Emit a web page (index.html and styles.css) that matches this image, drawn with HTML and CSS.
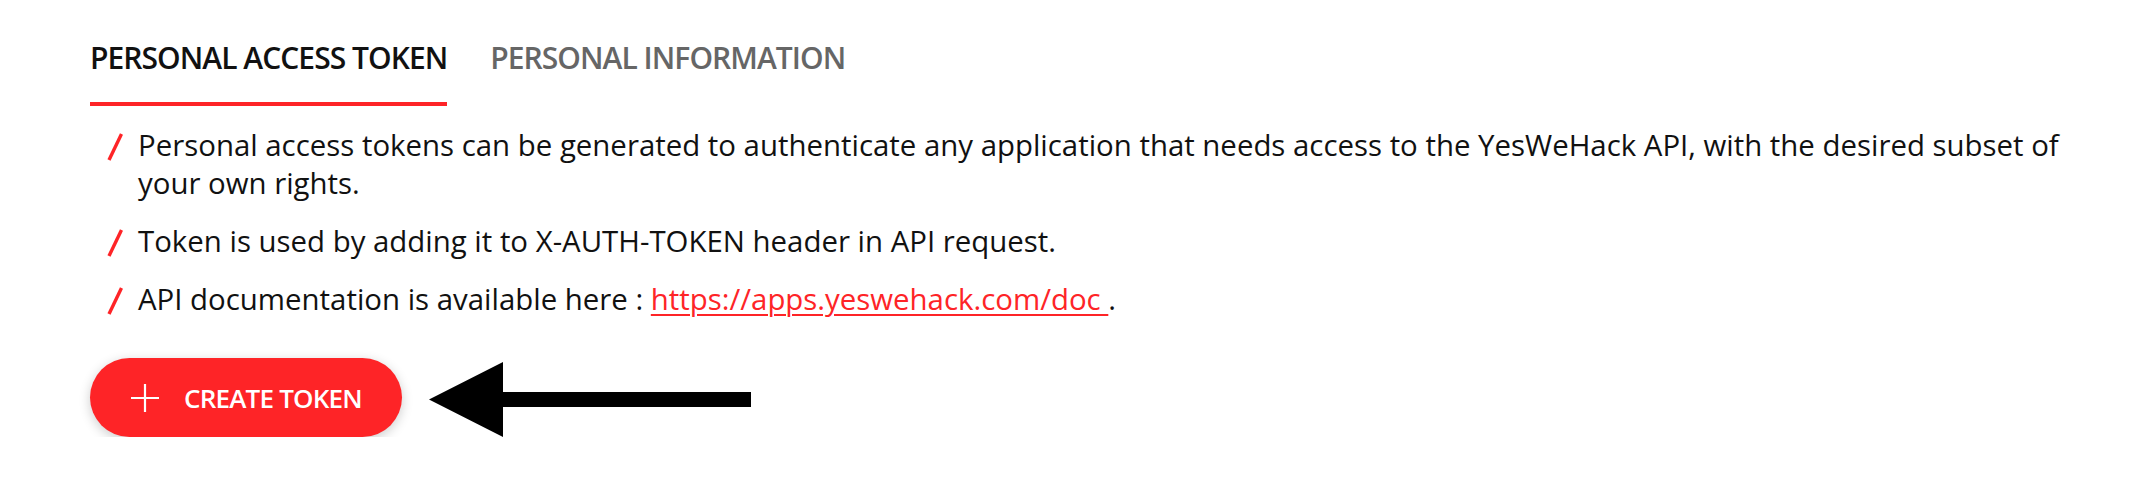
FILE: index.html
```html
<!DOCTYPE html>
<html lang="en">
<head>
<meta charset="utf-8">
<title>Personal access token</title>
<link rel="stylesheet" href="styles.css">
</head>
<body>
<div class="page">
  <nav class="tabs">
    <a class="tab tab-active">PERSONAL ACCESS TOKEN</a>
    <a class="tab">PERSONAL INFORMATION</a>
  </nav>
  <ul class="notes">
    <li class="note">
      <svg class="slash" width="16" height="28" viewBox="0 0 16 28"><line x1="14.5" y1="1" x2="2" y2="27" stroke="#fe2427" stroke-width="3.4"/></svg>
      <span class="note-text">Personal access tokens can be generated to authenticate any application that needs access to the YesWeHack API, with the desired subset of your own rights.</span>
    </li>
    <li class="note">
      <svg class="slash" width="16" height="28" viewBox="0 0 16 28"><line x1="14.5" y1="1" x2="2" y2="27" stroke="#fe2427" stroke-width="3.4"/></svg>
      <span class="note-text">Token is used by adding it to X-AUTH-TOKEN header in API request.</span>
    </li>
    <li class="note">
      <svg class="slash" width="16" height="28" viewBox="0 0 16 28"><line x1="14.5" y1="1" x2="2" y2="27" stroke="#fe2427" stroke-width="3.4"/></svg>
      <span class="note-text">API documentation is available here : <a class="doc-link" href="#">https://apps.yeswehack.com/doc </a>.</span>
    </li>
  </ul>
  <div class="actions">
    <button class="create-btn" type="button">
      <svg class="plus" width="28" height="28" viewBox="0 0 28 28"><path d="M14 0V28M0 14H28" stroke="#fff" stroke-width="2.2" fill="none"/></svg>
      <span>CREATE TOKEN</span>
    </button>
    <svg class="arrow" width="322" height="75" viewBox="0 0 322 75"><polygon points="0,37.5 74,0 74,30 322,30 322,45 74,45 74,75" fill="#000"/></svg>
  </div>
</div>
</body>
</html>
```
FILE: styles.css
```css
html, body {
  margin: 0;
  padding: 0;
  background: #fff;
}
body {
  font-family: "Open Sans", "Noto Sans", sans-serif;
  color: #111;
}
.page {
  padding: 43px 60px 0 90px;
}
.tabs {
  display: flex;
  gap: 43px;
}
.tab {
  font-size: 30px;
  font-weight: 600;
  letter-spacing: -0.95px;
  line-height: 30px;
  color: #666;
  padding-bottom: 29px;
  border-bottom: 4px solid transparent;
  white-space: nowrap;
  cursor: pointer;
}
.tab-active {
  color: #111;
  border-bottom-color: #fe2427;
}
.notes {
  list-style: none;
  margin: 20px 0 0;
  padding: 0;
  display: flex;
  flex-direction: column;
  gap: 20px;
}
.note {
  display: flex;
  align-items: flex-start;
  padding-left: 17px;
  gap: 15px;
  font-size: 29.4px;
  line-height: 38px;
}
.slash {
  flex: none;
  margin-top: 7px;
}
.note-text {
  flex: 1;
}
.doc-link {
  color: #fe2427;
  text-decoration: underline;
  text-decoration-thickness: 2px;
  text-underline-offset: 4px;
}
.actions {
  display: flex;
  align-items: flex-end;
  gap: 27px;
  margin-top: 40px;
}
.create-btn {
  display: inline-flex;
  align-items: center;
  gap: 25px;
  height: 79px;
  padding: 0 40px 0 41px;
  border: none;
  border-radius: 40px;
  background: #fe2427;
  color: #fff;
  font-family: "Open Sans", "Noto Sans", sans-serif;
  font-size: 26px;
  font-weight: 600;
  letter-spacing: -0.8px;
  box-shadow: 0 3px 12px rgba(0, 0, 0, 0.2);
  cursor: pointer;
}
.plus {
  flex: none;
}
.arrow {
  flex: none;
}
```
